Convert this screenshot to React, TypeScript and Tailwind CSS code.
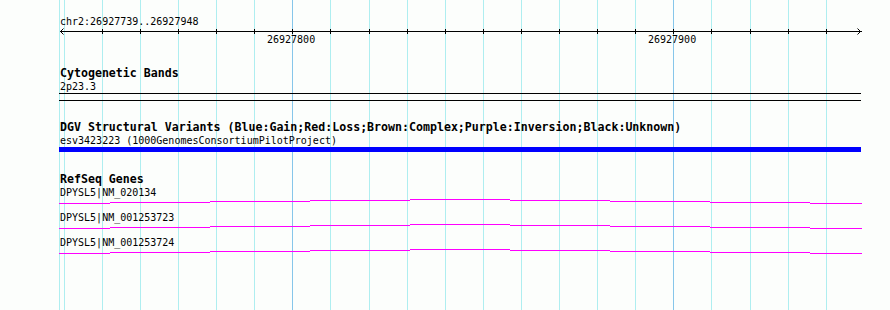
import React from 'react';

// grid positions (px) for every 10 bp, the two labelled ones are drawn darker
const gridLines = [64, 102, 140, 178, 216, 254, 292, 330, 369, 407, 445, 483, 521, 559, 597, 635, 673, 711, 750, 788, 826];
const majorLines = [292, 673];
const trackLeft = 59;

// the gene lines step up towards the middle and back down, 100px at a time
const segmentEdges = [59, 110, 210, 310, 410, 510, 610, 710, 810, 862];

const genes = ['DPYSL5|NM_020134', 'DPYSL5|NM_001253723', 'DPYSL5|NM_001253724'];

const GridBackground = () => (
  <svg className="absolute inset-0" width={890} height={310} shapeRendering="crispEdges">
    <rect x={59} y={0} width={1} height={310} fill="#aeeef0" />
    {gridLines.map((x) => (
      <rect key={x} x={x} y={0} width={1} height={310} fill={majorLines.includes(x) ? '#86c6ea' : '#aeeef0'} />
    ))}
  </svg>
);

const Ruler = () => (
  <div className="relative h-[20px]">
    <svg className="absolute left-0 top-0" width={803} height={8} shapeRendering="crispEdges">
      <rect x={1} y={3} width={802} height={1} fill="#000" />
      {gridLines
        .filter((x) => x > 70)
        .map((x) => (
          <rect key={x} x={x - trackLeft} y={1} width={1} height={5} fill="#000" />
        ))}
    </svg>
    <svg className="absolute left-0 top-0" width={803} height={8}>
      <polyline points="4.5,0.5 1.5,3.5 4.5,6.5" fill="none" stroke="#000" strokeWidth={1} />
      <polyline points="798.5,0.5 801.5,3.5 798.5,6.5" fill="none" stroke="#000" strokeWidth={1} />
    </svg>
    <span className="absolute left-[208px] top-[5px] leading-[13px]">26927800</span>
    <span className="absolute left-[589px] top-[5px] leading-[13px]">26927900</span>
  </div>
);

const GeneLine = () => (
  <svg width={803} height={12} shapeRendering="crispEdges" className="block">
    {segmentEdges.slice(0, -1).map((x, i) => (
      <rect
        key={x}
        x={x - trackLeft}
        y={Math.abs(i - 4)}
        width={segmentEdges[i + 1] - x}
        height={1}
        fill="#ff00ff"
      />
    ))}
  </svg>
);

export default function App() {
  return (
    <div className="relative h-[310px] w-[890px] overflow-hidden bg-[#fcfefc] font-['DejaVu_Sans_Mono',monospace] text-[10px] text-black">
      <GridBackground />
      <div className="relative ml-[59px] flex w-[803px] flex-col">
        <div className="mt-[15px] h-[13px] pl-px leading-[13px]">chr2:26927739..26927948</div>
        <Ruler />

        <div className="mt-[19px] h-[13px] pl-px text-[11.6px] font-bold leading-[13px]">Cytogenetic Bands</div>
        <div className="h-[13px] pl-px leading-[13px]">2p23.3</div>
        <div className="h-px w-[802px] bg-black" />
        <div className="mt-[6px] h-px w-[802px] bg-black" />

        <div className="mt-[20px] h-[13px] pl-px text-[11.6px] font-bold leading-[13px]">
          DGV Structural Variants (Blue:Gain;Red:Loss;Brown:Complex;Purple:Inversion;Black:Unknown)
        </div>
        <div className="h-[13px] pl-px leading-[13px]">esv3423223 (1000GenomesConsortiumPilotProject)</div>
        <div className="h-[5px] w-[802px] bg-[#0000ff]" />

        <div className="mt-[21px] h-[13px] pl-px text-[11.6px] font-bold leading-[13px]">RefSeq Genes</div>
        {genes.map((name) => (
          <div key={name} className="flex flex-col">
            <div className="h-[13px] pl-px leading-[13px]">{name}</div>
            <GeneLine />
          </div>
        ))}
      </div>
    </div>
  );
}
